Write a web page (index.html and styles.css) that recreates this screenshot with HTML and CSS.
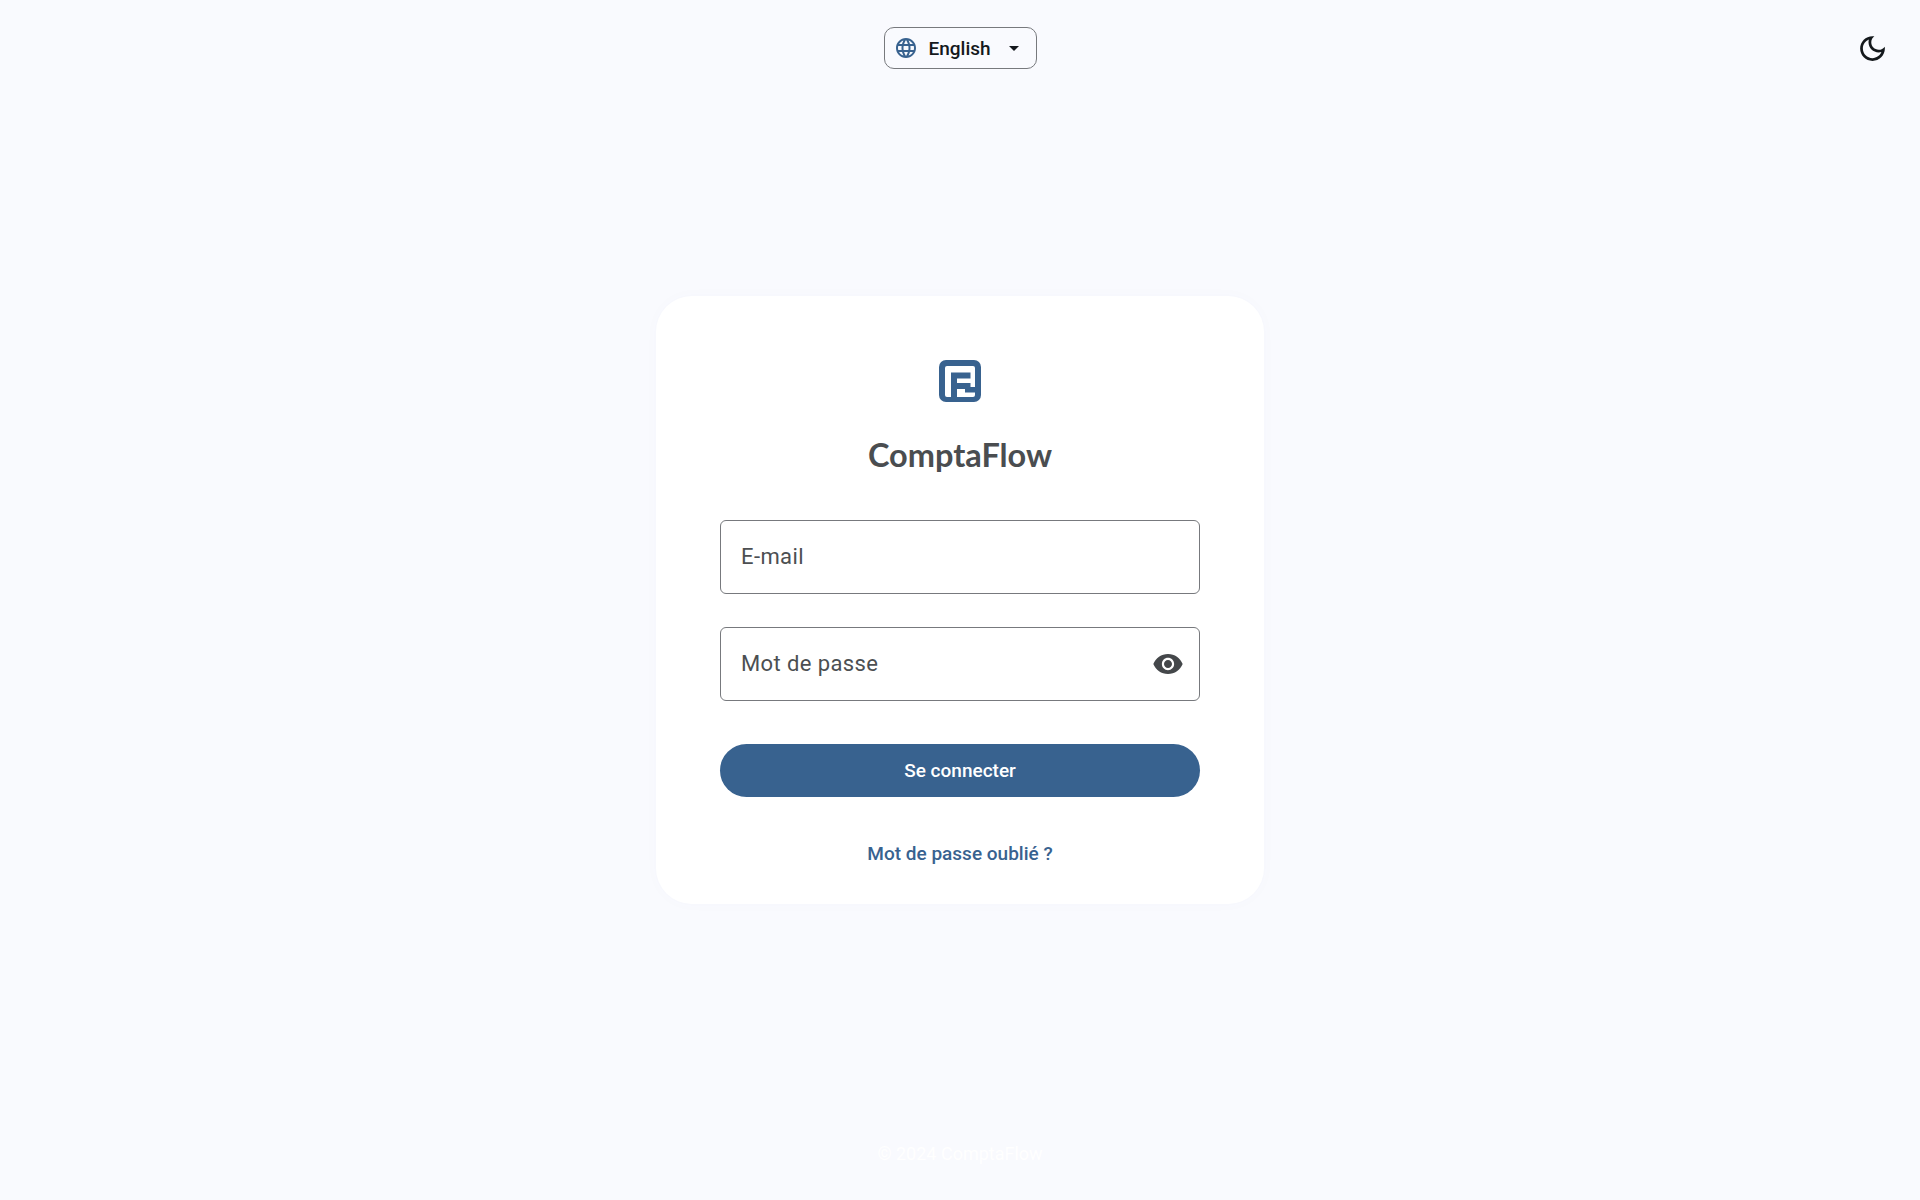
FILE: index.html
```html
<!DOCTYPE html>
<html lang="fr">
<head>
<meta charset="utf-8">
<title>ComptaFlow</title>
<link rel="stylesheet" href="styles.css">
</head>
<body>
<div class="page">
  <header class="topbar">
    <div></div>
    <button class="lang" type="button">
      <svg class="globe" viewBox="0 0 24 24"><path d="M11.99 2C6.47 2 2 6.48 2 12s4.47 10 9.99 10C17.52 22 22 17.52 22 12S17.52 2 11.99 2zm6.93 6h-2.95c-.32-1.25-.78-2.45-1.38-3.56 1.84.63 3.37 1.91 4.33 3.56zM12 4.04c.83 1.2 1.48 2.53 1.91 3.96h-3.82c.43-1.43 1.08-2.76 1.91-3.96zM4.26 14C4.1 13.36 4 12.69 4 12s.1-1.36.26-2h3.38c-.08.66-.14 1.32-.14 2 0 .68.06 1.34.14 2H4.26zm.82 2h2.95c.32 1.25.78 2.45 1.38 3.56-1.84-.63-3.37-1.9-4.33-3.56zm2.95-8H5.08c.96-1.66 2.49-2.93 4.33-3.56C8.81 5.55 8.35 6.75 8.03 8zM12 19.96c-.83-1.2-1.48-2.53-1.91-3.96h3.82c-.43 1.43-1.08 2.76-1.91 3.96zM14.34 14H9.66c-.09-.66-.16-1.32-.16-2 0-.68.07-1.35.16-2h4.68c.09.65.16 1.32.16 2 0 .68-.07 1.34-.16 2zm.25 5.56c.6-1.11 1.06-2.31 1.38-3.56h2.95c-.96 1.65-2.49 2.93-4.33 3.56zM16.36 14c.08-.66.14-1.32.14-2 0-.68-.06-1.34-.14-2h3.38c.16.64.26 1.31.26 2s-.1 1.36-.26 2h-3.38z"/></svg>
      <span class="lang-label">English</span>
      <svg class="caret" viewBox="0 0 24 24"><path d="M7 10l5 5 5-5z"/></svg>
    </button>
    <div class="topbar-end">
      <button class="theme" type="button" aria-label="Mode sombre">
        <svg viewBox="0 0 24 24"><path d="M9.37 5.51c-.18.64-.27 1.31-.27 1.99 0 4.08 3.32 7.4 7.4 7.4.68 0 1.35-.09 1.99-.27C17.45 17.19 14.93 19 12 19c-3.86 0-7-3.14-7-7 0-2.93 1.81-5.45 4.37-6.49zM12 3c-4.97 0-9 4.03-9 9s4.03 9 9 9 9-4.03 9-9c0-.46-.04-.92-.1-1.36-.98 1.37-2.58 2.26-4.4 2.26-2.98 0-5.4-2.42-5.4-5.4 0-1.81.89-3.42 2.26-4.4-.44-.06-.9-.1-1.36-.1z"/></svg>
      </button>
    </div>
  </header>

  <main class="center">
    <section class="card">
      <svg class="logo" viewBox="0 0 42 42">
        <rect class="logo-bg" width="42" height="42" rx="7"/>
        <rect class="logo-in" x="6" y="6" width="30" height="31" rx="2"/>
        <path class="logo-bg" d="M12 12.500h19.500v6H18v4.500h13.500V27H36v5.500H26V29H18V37H12z"/>
      </svg>
      <h1 class="title">ComptaFlow</h1>
      <form class="form">
        <div class="field"><input class="input" type="email" placeholder="E-mail"></div>
        <div class="field">
          <input class="input" type="password" placeholder="Mot de passe">
          <button class="eye" type="button" aria-label="Afficher">
            <svg viewBox="0 0 24 24"><path fill-rule="evenodd" d="M12 4.500C7 4.500 2.730 7.610 1 12c1.730 4.390 6 7.500 11 7.500s9.270-3.110 11-7.500c-1.730-4.390-6-7.500-11-7.500zM12 16.600c-2.540 0-4.600-2.060-4.600-4.600s2.060-4.600 4.600-4.600 4.600 2.060 4.600 4.600-2.060 4.600-4.600 4.600zM12 9c-1.660 0-3 1.340-3 3s1.340 3 3 3 3-1.340 3-3-1.340-3-3-3z"/></svg>
          </button>
        </div>
        <button class="submit" type="button">Se connecter</button>
      </form>
      <a class="forgot" href="#">Mot de passe oublié ?</a>
    </section>
  </main>

  <footer class="foot">© 2024 ComptaFlow</footer>
</div>
</body>
</html>
```
FILE: styles.css
```css
* { box-sizing: border-box; }
html, body { margin: 0; height: 100%; }
body {
  background: #f9fafe;
  color: #44474a;
  font-family: Roboto, "Liberation Sans", sans-serif;
}
.page {
  height: 1200px;
  display: grid;
  grid-template-rows: 96px 1fr 96px;
}
.topbar {
  display: grid;
  grid-template-columns: 1fr auto 1fr;
  align-items: start;
  padding: 27px 24px 0;
}
.lang {
  width: 153px;
  height: 42px;
  display: flex;
  align-items: center;
  padding: 0 0 0 9px;
  background: transparent;
  border: 1.5px solid #77797d;
  border-radius: 10px;
  font: 500 19px Roboto, sans-serif;
  color: #14181c;
}
.globe { width: 24px; height: 24px; fill: #38628f; flex: none; }
.lang-label { margin-left: 11px; }
.caret { width: 24px; height: 24px; fill: #14181c; margin-left: 11px; flex: none; }
.topbar-end { display: flex; justify-content: flex-end; }
.theme {
  width: 48px;
  height: 42px;
  padding: 0;
  background: none;
  border: 0;
  display: flex;
  align-items: center;
  justify-content: center;
}
.theme svg { width: 33px; height: 33px; fill: #14181c; }
.center { display: flex; align-items: center; justify-content: center; }
.card {
  width: 608px;
  height: 608px;
  padding: 64px;
  background: #fff;
  border-radius: 36px;
  box-shadow: 0 0 16px rgba(56, 98, 143, 0.02);
  display: flex;
  flex-direction: column;
  align-items: center;
}
.logo { width: 42px; height: 42px; flex: none; }
.logo-bg { fill: #38628f; }
.logo-in { fill: #fff; }
.title {
  margin: 32px 0 0;
  font: 700 32.500px/42px Lato, sans-serif;
  color: #4a4d50;
}
.form {
  width: 100%;
  margin-top: 44px;
  display: flex;
  flex-direction: column;
  gap: 33px;
}
.field { position: relative; }
.input {
  display: block;
  width: 100%;
  height: 74px;
  padding: 0 20px 2px;
  background: #fff;
  border: 1.5px solid #77797d;
  border-radius: 6px;
  font: 400 22px Roboto, sans-serif;
  letter-spacing: 0.4px;
  color: #44474a;
  outline: none;
}
.input::placeholder { color: #4c4f52; opacity: 1; }
.eye {
  position: absolute;
  right: 16px;
  top: 21px;
  width: 32px;
  height: 32px;
  padding: 0;
  background: none;
  border: 0;
}
.eye svg { display: block; width: 32px; height: 32px; fill: #44474a; }
.submit {
  height: 53px;
  margin-top: 10px;
  background: #38628f;
  border: 0;
  border-radius: 27px;
  color: #fff;
  font: 500 19px Roboto, sans-serif;
}
.forgot {
  margin-top: 46px;
  color: #38628f;
  font: 500 19px/22px Roboto, sans-serif;
  text-decoration: none;
}
.foot {
  display: flex;
  align-items: center;
  justify-content: center;
  padding-top: 3px;
  color: #fff;
  font-size: 18px;
}
```
